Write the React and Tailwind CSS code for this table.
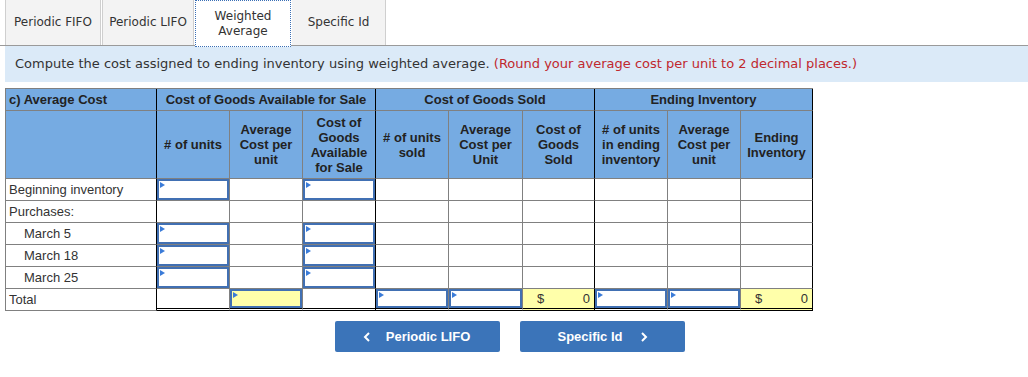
import React from "react";

const GRAY = "border-r-[#808080]";
const BLACK = "border-r-black";
const rb = (i) => (i === 2 || i === 5 || i === 8 ? BLACK : GRAY);

function Flag() {
  return (
    <span className="absolute left-px top-px h-0 w-0 border-y-[3px] border-l-[5px] border-y-transparent border-l-[#3a7bd8]" />
  );
}

function InputBox({ yellow }) {
  return (
    <div
      className={
        "relative h-full w-full border-2 border-[#4170b3] " +
        (yellow ? "bg-[#ffffaa]" : "bg-white")
      }
    >
      <Flag />
    </div>
  );
}

const subHeads = [
  ["# of units"],
  ["Average", "Cost per", "unit"],
  ["Cost of", "Goods", "Available", "for Sale"],
  ["# of units", "sold"],
  ["Average", "Cost per", "Unit"],
  ["Cost of", "Goods", "Sold"],
  ["# of units", "in ending", "inventory"],
  ["Average", "Cost per", "unit"],
  ["Ending", "Inventory"],
];

const rows = [
  { label: "Beginning inventory", indent: false, inputs: [0, 2] },
  { label: "Purchases:", indent: false, inputs: [] },
  { label: "March 5", indent: true, inputs: [0, 2] },
  { label: "March 18", indent: true, inputs: [0, 2] },
  { label: "March 25", indent: true, inputs: [0, 2] },
];

const totalCells = ["plain", "yinput", "plain", "input", "input", "dollar", "input", "input", "dollar"];

function Tab({ children, className }) {
  return (
    <div
      className={
        "flex h-[45px] flex-col items-center justify-center text-center text-[12px] leading-[15px] text-[#333] " +
        className
      }
    >
      {children}
    </div>
  );
}

export default function App() {
  return (
    <div className="h-[377px] w-[1028px] overflow-hidden bg-white">
      {/* tabs */}
      <div className="flex h-[46px] gap-px border-b border-[#9a9a9a] pl-[5px] font-['DejaVu_Sans',Verdana,sans-serif]">
        <Tab className="w-[96px] border-x border-[#cfcfcf] bg-[#f3f3f3]">Periodic FIFO</Tab>
        <Tab className="w-[92px] border-x border-[#cfcfcf] bg-[#f3f3f3]">Periodic LIFO</Tab>
        <div className="-mb-px flex h-[47px] w-[96px] flex-col items-center justify-center border border-dotted border-[#3a6fb5] bg-white text-center text-[12px] leading-[15px] text-[#333]">
          <span>Weighted</span>
          <span>Average</span>
        </div>
        <Tab className="w-[94px] border-r border-[#cfcfcf] bg-[#f3f3f3]">Specific Id</Tab>
      </div>

      {/* instructions */}
      <div className="ml-[5px] flex h-[36px] items-center bg-[#dbeaf8] pl-[10px] font-['DejaVu_Sans',Verdana,sans-serif] text-[13px] text-[#333]">
        <span>
          Compute the cost assigned to ending inventory using weighted average.{" "}
          <span className="text-[#c0282e]">(Round your average cost per unit to 2 decimal places.)</span>
        </span>
      </div>

      {/* table */}
      <div className="ml-[5px] mt-[6px] w-[808px] border-l border-t border-[#808080] font-['Liberation_Sans',Arial,sans-serif] text-[13px] text-[#333]">
        <div className="grid grid-cols-[151px_73px_73px_73px_73px_74px_72px_73px_73px_72px] grid-rows-[22px_68px_22px_22px_22px_22px_22px_22px]">
          {/* header row 1 */}
          <div className="flex items-center border-b border-r border-b-[#808080] border-r-black bg-[#76abe2] pl-[3px] font-bold text-[#222]">
            c) Average Cost
          </div>
          <div className="col-span-3 flex items-center justify-center border-b border-r border-b-[#808080] border-r-black bg-[#76abe2] font-bold text-[#222]">
            Cost of Goods Available for Sale
          </div>
          <div className="col-span-3 flex items-center justify-center border-b border-r border-b-[#808080] border-r-black bg-[#76abe2] font-bold text-[#222]">
            Cost of Goods Sold
          </div>
          <div className="col-span-3 flex items-center justify-center border-b border-r border-b-[#808080] border-r-black bg-[#76abe2] font-bold text-[#222]">
            Ending Inventory
          </div>

          {/* header row 2 */}
          <div className="border-b border-r border-b-[#808080] border-r-black bg-[#76abe2]" />
          {subHeads.map((lines, i) => (
            <div
              key={i}
              className={
                "flex flex-col items-center justify-center border-b border-r border-b-[#808080] bg-[#76abe2] text-center font-bold leading-[15px] text-[#222] " +
                rb(i)
              }
            >
              {lines.map((l, j) => (
                <span key={j} className="whitespace-nowrap">
                  {l}
                </span>
              ))}
            </div>
          ))}

          {/* data rows */}
          {rows.map((r) => (
            <React.Fragment key={r.label}>
              <div
                className={
                  "flex items-center border-b border-r border-b-[#808080] border-r-black bg-white " +
                  (r.indent ? "pl-[18px]" : "pl-[3px]")
                }
              >
                {r.label}
              </div>
              {subHeads.map((_, i) => (
                <div key={i} className={"border-b border-r border-b-[#808080] bg-white " + rb(i)}>
                  {r.inputs.includes(i) ? <InputBox /> : null}
                </div>
              ))}
            </React.Fragment>
          ))}

          {/* total row */}
          <div className="flex items-center border-b border-r border-b-[#808080] border-r-black bg-white pl-[3px]">
            Total
          </div>
          {totalCells.map((t, i) => (
            <div
              key={i}
              className={
                "border-b-[3px] border-r border-double border-b-black " +
                rb(i) +
                (t === "dollar" ? " flex items-center justify-between bg-[#ffffaa] pl-[14px] pr-[4px]" : " bg-white")
              }
            >
              {t === "input" ? <InputBox /> : null}
              {t === "yinput" ? <InputBox yellow /> : null}
              {t === "dollar" ? (
                <>
                  <span>$</span>
                  <span>0</span>
                </>
              ) : null}
            </div>
          ))}
        </div>
      </div>

      {/* buttons */}
      <div className="mt-[10px] flex justify-center gap-5 pr-2 font-['Liberation_Sans',Arial,sans-serif] text-[13px] font-bold text-white">
        <button className="flex h-[31px] w-[165px] items-center justify-center gap-[15px] rounded-[2px] bg-[#3b74b9] pr-[2px]">
          <svg width="8" height="10" viewBox="0 0 8 10" fill="none">
            <polyline points="6,1 2,5 6,9" stroke="white" strokeWidth="2" />
          </svg>
          <span>Periodic LIFO</span>
        </button>
        <button className="flex h-[31px] w-[165px] items-center justify-center gap-[17px] rounded-[2px] bg-[#3b74b9]">
          <span>Specific Id</span>
          <svg width="8" height="10" viewBox="0 0 8 10" fill="none">
            <polyline points="2,1 6,5 2,9" stroke="white" strokeWidth="2" />
          </svg>
        </button>
      </div>
    </div>
  );
}
